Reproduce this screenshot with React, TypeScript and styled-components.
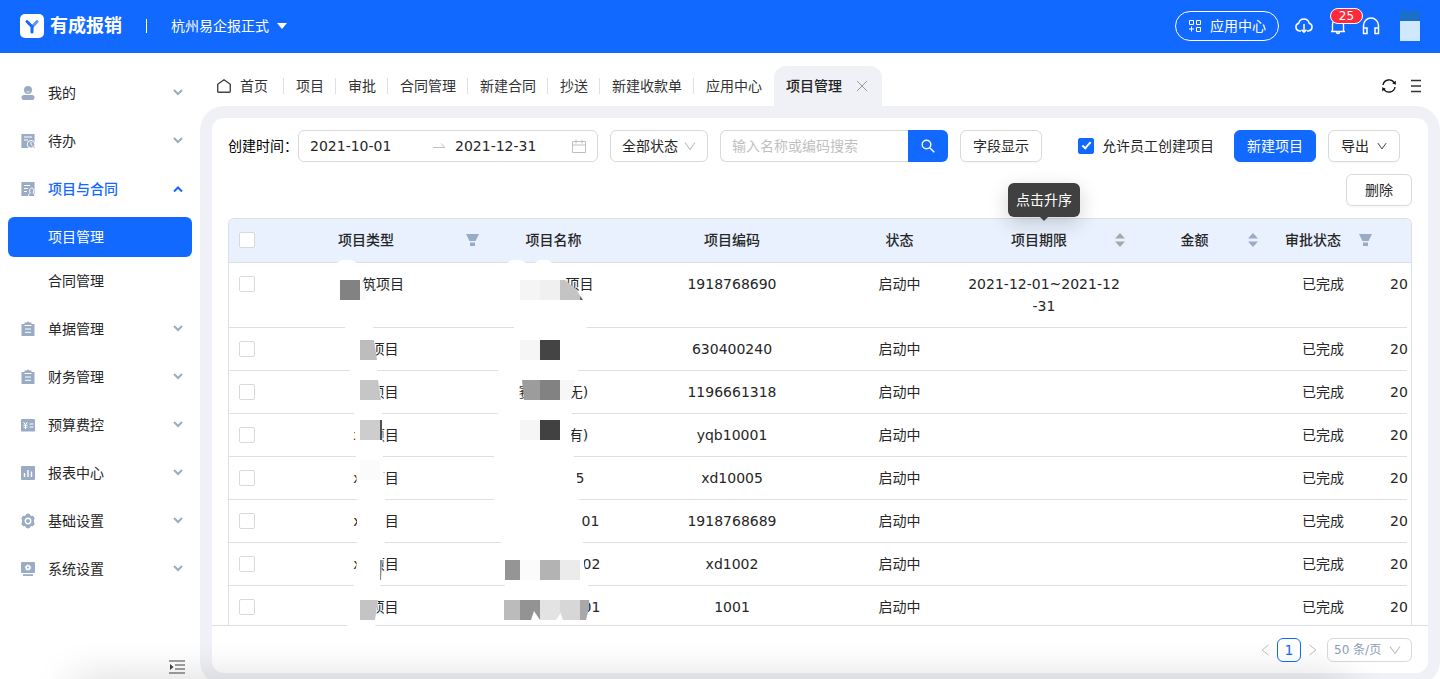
import React from "react";
import styled, { createGlobalStyle, css } from "styled-components";

const blue = "#1269ff";
const slate = "#9aabc4";
const line = "#dcdfe6";

const GlobalStyle = createGlobalStyle`
  *, *::before, *::after { box-sizing: border-box; }
  body {
    margin: 0;
    background: #fff;
    color: #262626;
    font: 14px/22px "DejaVu Sans", "Noto Sans CJK SC", sans-serif;
  }
  button, input, select { font: inherit; color: inherit; }
  button { cursor: pointer; }
  a { color: inherit; text-decoration: none; }
  ul { list-style: none; margin: 0; padding: 0; }
  svg { display: block; flex: none; }
`;

/* ---------- shell ---------- */

const App = styled.div`
  display: flex;
  flex-direction: column;
  height: 100vh;
  overflow: hidden;
`;

const Header = styled.header`
  flex: none;
  display: flex;
  align-items: center;
  height: 53px;
  padding: 0 20px 2px;
  background: ${blue};
  color: #fff;
`;

const Brand = styled.a`
  display: flex;
  align-items: center;
  gap: 6px;
  font-size: 18px;
  font-weight: 700;
`;

const HeaderRule = styled.span`
  width: 1px;
  height: 14px;
  margin: 0 24px;
  background: #fff;
`;

const PlainButton = styled.button`
  display: flex;
  align-items: center;
  gap: 8px;
  padding: 0;
  border: 0;
  background: none;
`;

const HeaderTools = styled.div`
  display: flex;
  align-items: center;
  gap: 14px;
  margin-left: auto;
`;

const AppCenterButton = styled(PlainButton)`
  height: 30px;
  padding: 0 12px;
  border: 1px solid #fff;
  border-radius: 15px;
`;

const BellButton = styled(PlainButton)`
  position: relative;
`;

const Badge = styled.span`
  position: absolute;
  top: -8px;
  left: 1px;
  width: 33px;
  height: 16px;
  border: 1px solid #fff;
  border-radius: 8px;
  background: #ff2a3c;
  font-size: 12px;
  line-height: 14px;
  text-align: center;
`;

const Avatar = styled.div`
  width: 20px;
  height: 30px;
  margin-left: 5px;
  background: linear-gradient(#1a6fc8 10px, #cfe8fd 10px);
`;

const Body = styled.div`
  flex: 1;
  display: flex;
  min-height: 0;
`;

/* ---------- sidebar ---------- */

const Sidebar = styled.nav`
  flex: none;
  display: flex;
  flex-direction: column;
  width: 200px;
  padding: 20px 8px 4px;
`;

const Menu = styled.ul`
  display: flex;
  flex-direction: column;
  gap: 8px;
`;

const SubMenu = styled.ul`
  display: flex;
  flex-direction: column;
  gap: 4px;
  margin-top: 8px;
`;

const MenuButton = styled.button<{ $open?: boolean }>`
  display: flex;
  align-items: center;
  gap: 12px;
  width: 100%;
  height: 40px;
  padding: 0 8px 0 12px;
  border: 0;
  background: none;
  text-align: left;
  ${(p) => p.$open && css`color: ${blue}; font-weight: 500;`}
  span { flex: 1; }
`;

const SubLink = styled.a<{ $active?: boolean }>`
  display: block;
  padding: 9px 40px;
  border-radius: 6px;
  ${(p) => p.$active && css`background: ${blue}; color: #fff;`}
`;

const CollapseButton = styled(PlainButton)`
  align-self: flex-end;
  margin: auto 7px 0 0;
`;

/* ---------- tabs ---------- */

const Main = styled.div`
  flex: 1;
  display: flex;
  flex-direction: column;
  min-width: 0;
`;

const TabBar = styled.div`
  flex: none;
  display: flex;
  align-items: flex-end;
  height: 53px;
  padding: 0 18px 0 16px;
`;

const Tab = styled.a<{ $home?: boolean; $last?: boolean }>`
  display: flex;
  align-items: center;
  gap: 8px;
  height: 40px;
  padding-left: ${(p) => (p.$home ? 0 : 12)}px;
  color: #333;
  &::after {
    content: "";
    width: 1px;
    height: 16px;
    margin-left: ${(p) => (p.$home ? 7 : 3)}px;
    background: ${(p) => (p.$last ? "transparent" : line)};
  }
`;

const ActiveTab = styled.div`
  display: flex;
  align-items: center;
  gap: 14px;
  height: 40px;
  padding: 0 14px 0 12px;
  border-radius: 12px 12px 0 0;
  background: #eff1f6;
  color: #222;
  font-weight: 500;
`;

const TabTools = styled.div`
  display: flex;
  align-items: center;
  gap: 13px;
  height: 40px;
  margin-left: auto;
`;

const Frame = styled.main`
  flex: 1;
  display: flex;
  min-height: 0;
  margin-bottom: -6px;
  padding: 12px;
  border-radius: 24px;
  background: #eff1f6;
`;

const Panel = styled.section`
  position: relative;
  flex: 1;
  display: flex;
  flex-direction: column;
  min-width: 0;
  border-radius: 12px;
  background: #fff;
`;

/* ---------- filters ---------- */

const Filters = styled.form`
  flex: none;
  display: flex;
  align-items: center;
  gap: 12px;
  padding: 12px 28px 12px 16px;
`;

const RangeLabel = styled.label`
  margin-right: -12px;
  color: #000;
  white-space: nowrap;
`;

const Box = css`
  height: 32px;
  border: 1px solid #d9d9d9;
  border-radius: 6px;
  background: #fff;
`;

const RangeField = styled.div`
  ${Box}
  display: flex;
  align-items: center;
  gap: 10px;
  flex: 0 1 300px;
  min-width: 0;
  padding: 0 11px;
  svg:last-child { margin-left: -6px; }
`;

const DateInput = styled.input`
  flex: 1;
  min-width: 0;
  padding: 0;
  border: 0;
  outline: 0;
  background: none;
`;

const SelectWrap = styled.span<{ $small?: boolean }>`
  ${Box}
  display: inline-flex;
  align-items: center;
  padding: 0 11px;
  ${(p) =>
    p.$small &&
    css`
      height: 24px;
      padding: 0 10px 0 6px;
      color: #8c9db8;
      font-size: 12px;
    `}
`;

const Select = styled.select<{ $width: number }>`
  width: ${(p) => p.$width}px;
  padding: 0;
  border: 0;
  outline: 0;
  background: none;
  appearance: none;
`;

const Search = styled.div`
  display: flex;
  flex: 0 1 228px;
  min-width: 0;
  height: 32px;
`;

const SearchInput = styled.input`
  flex: 1;
  min-width: 0;
  padding: 0 11px;
  border: 1px solid #d9d9d9;
  border-right: 0;
  border-radius: 6px 0 0 6px;
  outline: 0;
  &::placeholder { color: #bfbfbf; }
`;

const SearchButton = styled.button`
  display: grid;
  place-items: center;
  width: 40px;
  padding: 0;
  border: 0;
  border-radius: 0 6px 6px 0;
  background: ${blue};
`;

const Button = styled.button<{ $primary?: boolean }>`
  ${Box}
  display: inline-flex;
  align-items: center;
  gap: 8px;
  padding: 0 12px;
  white-space: nowrap;
  box-shadow: 0 2px 0 rgba(0, 0, 0, 0.02);
  ${(p) => p.$primary && css`border-color: ${blue}; background: ${blue}; color: #fff;`}
`;

const DeleteButton = styled(Button)`
  padding: 0 18px;
`;

const AllowLabel = styled.label`
  display: flex;
  align-items: center;
  gap: 8px;
  margin: 0 8px 0 auto;
  white-space: nowrap;
`;

const Check = styled.input`
  appearance: none;
  display: block;
  flex: none;
  width: 16px;
  height: 16px;
  margin: 0;
  border: 1px solid #d9d9d9;
  border-radius: 2px;
  background: #fff;
  &:checked {
    border-color: ${blue};
    background: ${blue};
  }
  &:checked::after {
    content: "";
    display: block;
    width: 5px;
    height: 9px;
    margin: 1px 0 0 5px;
    border: solid #fff;
    border-width: 0 2px 2px 0;
    transform: rotate(42deg);
  }
`;

const Actions = styled.div`
  flex: none;
  display: flex;
  justify-content: flex-end;
  padding: 0 16px 12px;
`;

/* ---------- table ---------- */

const TableArea = styled.div`
  flex: 1;
  min-height: 0;
  margin: 0 16px;
  border: solid ${line};
  border-width: 1px 1px 0;
  border-radius: 6px 6px 0 0;
  clip-path: inset(-90px 0 0 0);
`;

const Table = styled.table`
  width: 100%;
  table-layout: fixed;
  border-collapse: separate;
  border-spacing: 0;
  text-align: center;
`;

const Th = styled.th`
  position: relative;
  height: 44px;
  padding: 0 8px 2px;
  border-bottom: 1px solid ${line};
  background: #e9f1ff;
  font-weight: 500;
  white-space: nowrap;
  &:first-child { padding: 0 10px 2px; border-top-left-radius: 5px; }
  &:last-child { border-top-right-radius: 5px; }
`;

const ThInner = styled.div`
  display: flex;
  align-items: center;
  span { flex: 1; }
`;

const FilterButton = styled(PlainButton)`
  justify-content: flex-end;
  width: 20px;
`;

const Td = styled.td`
  padding: 10px 8px;
  border-bottom: 1px solid ${line};
  vertical-align: top;
  word-break: break-all;
  &:first-child { padding: 13px 10px; }
`;

const EdgeTd = styled(Td)`
  padding: 10px 0 10px 10px;
  white-space: nowrap;
  text-align: left;
`;

const Unbroken = styled.span`
  display: inline-block;
  white-space: nowrap;
`;

const Gap = styled.i<{ $width: number }>`
  display: inline-block;
  width: ${(p) => p.$width}px;
`;

const Tooltip = styled.div`
  position: absolute;
  bottom: 45px;
  left: 50%;
  width: 72px;
  padding: 6px 8px;
  margin-left: -36px;
  border-radius: 6px;
  background: #404040;
  box-shadow: 0 6px 20px rgba(0, 0, 0, 0.18);
  color: #fff;
  font-weight: 400;
  &::after {
    content: "";
    position: absolute;
    top: 100%;
    left: 50%;
    margin-left: -4px;
    border: 4px solid transparent;
    border-top-color: #404040;
    border-bottom: 0;
  }
`;

const Mosaic = styled.svg`
  position: absolute;
  top: 137px;
  left: 118px;
  pointer-events: none;
`;

const Footer = styled.footer`
  flex: none;
  display: flex;
  align-items: center;
  justify-content: flex-end;
  height: 48px;
  padding: 0 16px;
  border-top: 1px solid ${line};
`;

const PageButton = styled.button`
  width: 24px;
  height: 24px;
  margin: 0 8px;
  padding: 0;
  border: 1px solid ${blue};
  border-radius: 6px;
  background: #fff;
  color: ${blue};
  font-weight: 500;
  line-height: 20px;
`;

const PageSize = styled.div`
  margin-left: 10px;
  display: flex;
`;

const BottomShade = styled.div`
  position: fixed;
  bottom: -30px;
  left: 80px;
  right: 100px;
  height: 20px;
  box-shadow: 0 0 44px 6px rgba(0, 0, 0, 0.2);
  pointer-events: none;
`;

/* ---------- icons ---------- */

const Chevron = ({ up, color = slate }: { up?: boolean; color?: string }) => (
  <svg width="12" height="12" viewBox="0 0 12 12" fill="none" stroke={color} strokeWidth="2">
    <path d={up ? "M2 8.5 6 4.5 10 8.5" : "M2 3 6 7 10 3"} />
  </svg>
);

const ThinDown = ({ color = "#bfbfbf", size = 12 }: { color?: string; size?: number }) => (
  <svg width={size} height={size} viewBox="0 0 12 12" fill="none" stroke={color} strokeWidth="1.1">
    <path d="M1 2.5 6 9.5 11 2.5" />
  </svg>
);

const Funnel = () => (
  <svg width="14" height="14" viewBox="0 0 14 14" fill={slate}>
    <path d="M1 1h13l-3.500 7h-6zM5 9.500h5V13H5z" />
  </svg>
);

const Sorter = ({ color = slate }: { color?: string }) => (
  <svg width="10" height="16" viewBox="0 0 10 16" fill={color}>
    <path d="M5 1 10 6.500H0zM5 15 0 9.500h10z" />
  </svg>
);

type IconName = "user" | "todo" | "project" | "doc" | "budget" | "report" | "gear" | "system";

const iconShapes: Record<IconName, React.ReactNode> = {
  user: (
    <>
      <circle cx="8" cy="5" r="4" />
      <rect x="1.500" y="10" width="13" height="5" rx="2.500" />
      <path d="M6.500 6.500q1.500 1.200 3 0" fill="none" stroke="#fff" strokeWidth=".8" />
    </>
  ),
  todo: (
    <>
      <path d="M2 1h12a.6.6 0 0 1 .6.6V15H2a.6.6 0 0 1-.6-.6V1.600A.6.6 0 0 1 2 1z" />
      <path d="M4 4h8M4 7h4" stroke="#fff" />
      <circle cx="11" cy="11.300" r="3.800" stroke="#fff" />
      <path d="M11 9v2.500l1.600 1.300" fill="none" stroke="#fff" />
    </>
  ),
  project: (
    <>
      <path d="M2 1h12a.6.6 0 0 1 .6.6V15H2a.6.6 0 0 1-.6-.6V1.600A.6.6 0 0 1 2 1z" />
      <path d="M4 4.500h6M4 7.500h4M4 10.500h3" stroke="#fff" />
      <path d="M8.500 15c0-2 1-2.600 1.800-3C8.800 9.500 9.800 7 11.700 7s2.800 2.500 1.400 5c.8.400 1.700 1 1.700 3" fill={slate} stroke="#fff" />
    </>
  ),
  doc: (
    <>
      <path d="M1.500 3h3V1.500h2L8 .5l1.500 1h2V3h3v12h-13z" />
      <path d="M4.500 4.500h7M5 8h6M5 11.300h6" stroke="#fff" />
    </>
  ),
  budget: (
    <>
      <rect x="1" y="2" width="14" height="12.500" rx="1" />
      <path d="m3.500 5 2 2.800 2-2.800M5.500 7.500V12M3.500 8.300h4M3.500 10.200h4M9.500 7h4M9.500 10h4" fill="none" stroke="#fff" />
    </>
  ),
  report: (
    <>
      <rect x="1" y="1" width="14" height="14" rx="1" />
      <path d="M4.500 8v4M8 5v7M11.500 6.500V12" stroke="#fff" strokeWidth="1.400" />
    </>
  ),
  gear: (
    <>
      <path d="M6 1.200 8 .5l2 .7.900 1.700 2-.1 1.800 2.200-.7 2v2l.7 2-1.800 2.200-2-.1-.9 1.700-2 .7-2-.7-.9-1.700-2 .1L1.300 11 2 9V7l-.7-2 1.800-2.200 2 .1z" />
      <circle cx="8" cy="8" r="2.700" fill="none" stroke="#fff" strokeWidth="1.500" />
    </>
  ),
  system: (
    <>
      <rect x="1" y="1" width="14" height="11" rx="1" />
      <rect x="3" y="13.200" width="10" height="1.800" />
      <circle cx="8" cy="6.500" r="1.800" fill="none" stroke="#fff" strokeWidth="1.600" />
      <circle cx="8" cy="6.500" r="2.800" fill="none" stroke="#fff" strokeDasharray="1.200 1.730" />
    </>
  ),
};

const MenuIcon = ({ name }: { name: IconName }) => (
  <svg width="16" height="16" viewBox="0 0 16 16" fill={slate}>
    {iconShapes[name]}
  </svg>
);

/* ---------- data ---------- */

const menu: { icon: IconName; label: string; children?: string[] }[] = [
  { icon: "user", label: "我的" },
  { icon: "todo", label: "待办" },
  { icon: "project", label: "项目与合同", children: ["项目管理", "合同管理"] },
  { icon: "doc", label: "单据管理" },
  { icon: "doc", label: "财务管理" },
  { icon: "budget", label: "预算费控" },
  { icon: "report", label: "报表中心" },
  { icon: "gear", label: "基础设置" },
  { icon: "system", label: "系统设置" },
];

const tabs = ["项目", "审批", "合同管理", "新建合同", "抄送", "新建收款单", "应用中心"];

const columnWidths = [36, 222, 133, undefined, 111, 178, 133, 114, 27, 4];

/* A redacted text keeps the part before and after the hidden run, and the width of that run. */
type Redacted = [before: string, hidden: number, after: string];

const rows: { type: Redacted; name: Redacted; code: string; period?: [string, string] }[] = [
  { type: ["", 14, "筑项目"], name: ["", 52, "项目"], code: "1918768690", period: ["2021-12-01~2021-12", "-31"] },
  { type: ["", 17, "项目"], name: ["", 0, ""], code: "630400240" },
  { type: ["", 17, "项目"], name: ["赛", 36, "无)"], code: "1196661318" },
  { type: ["x", 9, "项目"], name: ["", 50, "有)"], code: "yqb10001" },
  { type: ["x", 9, "项目"], name: ["", 53, "5"], code: "xd10005" },
  { type: ["x", 9, "项目"], name: ["", 74, "01"], code: "1918768689" },
  { type: ["x", 9, "项目"], name: ["", 76, "02"], code: "xd1002" },
  { type: ["", 17, "项目"], name: ["", 76, "01"], code: "1001" },
];

const RedactedText = ({ value: [before, hidden, after] }: { value: Redacted }) => (
  <>
    {before}
    <Gap $width={hidden} />
    {after}
  </>
);

const tiles: [points: string, fill: string][] = [
  ["340,280 360,280 360,300 340,300", "#828282"],
  ["360,290 364,280 366,300 360,300", "#fbfbfb"],
  ["360,340 374,340 377,360 360,360", "#bdbdbd"],
  ["360,380 378,380 381,400 360,400", "#c6c6c6"],
  ["360,420 380,420 380,440 360,440", "#cdcdcd"],
  ["380,420 382,420 382,440 380,440", "#505050"],
  ["360,460 380,460 380,480 360,480", "#fbfbfb"],
  ["380,560 382,560 381,580 380,580", "#8a8a8a"],
  ["360,600 378,600 375,620 360,620", "#c4c4c4"],
  ["520,280 540,280 540,300 520,300", "#f5f5f5"],
  ["540,280 560,280 560,300 540,300", "#f0f0f0"],
  ["560,280 565,280 576,289 583,300 560,300", "#c4c4c4"],
  ["580,296 583,300 580,300", "#666"],
  ["520,340 540,340 540,360 520,360", "#f6f6f6"],
  ["540,340 560,340 560,360 540,360", "#444"],
  ["522,380 540,380 540,400 524,400", "#9c9c9c"],
  ["540,380 560,380 560,400 540,400", "#828282"],
  ["560,380 575,380 571,400 560,400", "#f7f7f7"],
  ["520,420 540,420 540,440 520,440", "#f6f6f6"],
  ["540,420 560,420 560,440 540,440", "#414141"],
  ["505,560 520,560 520,580 505,580", "#959595"],
  ["520,560 540,560 540,580 520,580", "#fbfbfb"],
  ["540,560 560,560 560,580 540,580", "#b3b3b3"],
  ["560,560 580,560 580,580 560,580", "#ebebeb"],
  ["504,600 520,600 520,620 504,620", "#bbb"],
  ["520,600 540,600 540,620 534,611 531,620 520,620", "#939393"],
  ["540,600 560,600 560,614 556,620 540,620", "#e3e3e3"],
  ["560,600 580,600 580,620 563,620 560,612", "#d7d7d7"],
  ["580,600 589,600 589,608 586,620 580,620", "#a8a8a8"],
];

const smears = [
  "337,263 341,260 352,260 357,263 361,275 366,300 373,327 376,350 377,371 381,395 382,414 383,457 385,500 385,542 382,565 380,585 377,610 375,628 365,635 355,635 347,625 352,600 354,585 357,560 357,500 356,457 354,414 350,371 345,327 338,290",
  "507,263 511,260 521,260 526,263 535,263 539,260 548,260 552,263 560,275 566,290 583,300 587,327 580,350 578,371 571,392 572,414 571,440 574,457 577,478 579,500 581,521 583,543 584,564 588,586 588,596 584,600 589,622 504,622 505,587 501,543 494,500 494,457 496,414 510,410 524,405 524,382 519,378 498,371 510,340 514,327",
];

/* ---------- page ---------- */

export default function ProjectManagement() {
  return (
    <App>
      <GlobalStyle />
      <Header>
        <Brand href="#">
          <svg width="24" height="24" viewBox="0 0 24 24" fill="none" strokeWidth="3" strokeLinecap="round">
            <rect width="24" height="24" rx="5" fill="#fff" />
            <path d="M12.500 12.500 17 7.500" stroke="#5b96ff" />
            <path d="M7 7.500l5 5V18" stroke={blue} strokeLinejoin="round" />
          </svg>
          有成报销
        </Brand>
        <HeaderRule />
        <PlainButton type="button">
          杭州易企报正式
          <svg width="10" height="6" viewBox="0 0 10 6" fill="#fff">
            <path d="M0 0h10L5 6z" />
          </svg>
        </PlainButton>
        <HeaderTools>
          <AppCenterButton type="button">
            <svg width="14" height="14" viewBox="0 0 14 14" fill="none" stroke="#fff">
              <path d="M1.500 1.500h4v4h-4zM8.500 1.500h4v4h-4zM8.500 8.500h4v4h-4zM3.500 7.500v5M1 10h5" />
            </svg>
            应用中心
          </AppCenterButton>
          <PlainButton type="button" aria-label="下载">
            <svg width="22" height="20" viewBox="0 0 22 20" fill="none" stroke="#fff" strokeWidth="1.500">
              <path d="M8 15H6.500a4 4 0 0 1-.8-7.800A5.400 5.400 0 0 1 16.200 7.200 4 4 0 0 1 15.500 15H14M11 8v8M8.500 13.700l2.500 2.500 2.500-2.500" />
            </svg>
          </PlainButton>
          <BellButton type="button" aria-label="消息">
            <svg width="18" height="20" viewBox="0 0 18 20" fill="none" stroke="#fff" strokeWidth="1.400">
              <path d="M2 15.500h14M3.500 15.500V8.500a5.500 5.500 0 0 1 11 0v7M7.500 16a1.500 1.500 0 0 0 3 0" />
            </svg>
            <Badge>25</Badge>
          </BellButton>
          <PlainButton type="button" aria-label="客服">
            <svg width="20" height="20" viewBox="0 0 20 20" fill="none" stroke="#fff" strokeWidth="1.500">
              <path d="M2.500 17.500V9.500a7.500 7.500 0 0 1 15 0v8M2.500 12H6v5.500H2.500zM17.500 12H14v5.500h3.500z" />
            </svg>
          </PlainButton>
          <Avatar />
        </HeaderTools>
      </Header>

      <Body>
        <Sidebar>
          <Menu>
            {menu.map(({ icon, label, children }) => (
              <li key={label}>
                <MenuButton type="button" $open={!!children} aria-expanded={!!children}>
                  <MenuIcon name={icon} />
                  <span>{label}</span>
                  <Chevron up={!!children} color={children ? blue : slate} />
                </MenuButton>
                {children && (
                  <SubMenu>
                    {children.map((child, i) => (
                      <li key={child}>
                        <SubLink href="#" $active={i === 0}>
                          {child}
                        </SubLink>
                      </li>
                    ))}
                  </SubMenu>
                )}
              </li>
            ))}
          </Menu>
          <CollapseButton type="button" aria-label="收起菜单">
            <svg width="16" height="16" viewBox="0 0 16 16" fill="#444">
              <path d="M0 1.500h16v1H0zM6 5.500h10v1H6zM6 9.500h10v1H6zM0 13.500h16v1H0zM1 5l3.500 3L1 11z" />
            </svg>
          </CollapseButton>
        </Sidebar>

        <Main>
          <TabBar>
            <Tab href="#" $home>
              <svg width="16" height="16" viewBox="0 0 16 16" fill="none" stroke="#444" strokeWidth="1.400">
                <path d="M1.700 6.200 8 1.700l6.300 4.500v7.100a1 1 0 0 1-1 1H2.700a1 1 0 0 1-1-1z" strokeLinejoin="round" />
              </svg>
              首页
            </Tab>
            {tabs.map((tab, i) => (
              <Tab key={tab} href="#" $last={i === tabs.length - 1}>
                {tab}
              </Tab>
            ))}
            <ActiveTab>
              项目管理
              <PlainButton type="button" aria-label="关闭">
                <svg width="12" height="12" viewBox="0 0 12 12" stroke="#999">
                  <path d="M1 1l10 10M11 1 1 11" />
                </svg>
              </PlainButton>
            </ActiveTab>
            <TabTools>
              <PlainButton type="button" aria-label="刷新">
                <svg width="16" height="16" viewBox="0 0 16 16" fill="none" stroke="#111" strokeWidth="1.400">
                  <path d="M2 7a6.100 6.100 0 0 1 11.300-2M14 9a6.100 6.100 0 0 1-11.300 2" />
                  <path d="M14.800 2.800v4l-3.600-1.500zM1.200 13.200v-4l3.600 1.500z" fill="#111" stroke="none" />
                </svg>
              </PlainButton>
              <PlainButton type="button" aria-label="更多">
                <svg width="12" height="14" viewBox="0 0 12 14" stroke="#333" strokeWidth="1.300">
                  <path d="M1 1.500h10M1 7h10M1 12.500h10" />
                </svg>
              </PlainButton>
            </TabTools>
          </TabBar>

          <Frame>
            <Panel>
              <Filters onSubmit={(e) => e.preventDefault()}>
                <RangeLabel htmlFor="from">创建时间：</RangeLabel>
                <RangeField>
                  <DateInput id="from" defaultValue="2021-10-01" />
                  <svg width="12" height="8" viewBox="0 0 12 8" fill="none" stroke="#bfbfbf">
                    <path d="M0 5.500h12L8 1.500" />
                  </svg>
                  <DateInput aria-label="结束日期" defaultValue="2021-12-31" />
                  <svg width="14" height="14" viewBox="0 0 14 14" fill="none" stroke="#bfbfbf">
                    <path d="M.5 2.500h13v11H.5zM.5 6h13M4 .5v4M10 .5v4" />
                  </svg>
                </RangeField>
                <SelectWrap>
                  <Select $width={62} aria-label="状态">
                    <option>全部状态</option>
                  </Select>
                  <ThinDown />
                </SelectWrap>
                <Search>
                  <SearchInput aria-label="搜索" placeholder="输入名称或编码搜索" />
                  <SearchButton aria-label="查询">
                    <svg width="14" height="14" viewBox="0 0 14 14" fill="none" stroke="#fff" strokeWidth="1.400">
                      <circle cx="5.500" cy="5.500" r="4.300" />
                      <path d="m8.700 8.700 4.600 4.600" />
                    </svg>
                  </SearchButton>
                </Search>
                <Button type="button">字段显示</Button>
                <AllowLabel>
                  <Check type="checkbox" defaultChecked />
                  允许员工创建项目
                </AllowLabel>
                <Button type="button" $primary>
                  新建项目
                </Button>
                <Button type="button">
                  导出
                  <ThinDown color="#333" size={10} />
                </Button>
              </Filters>
              <Actions>
                <DeleteButton type="button">删除</DeleteButton>
              </Actions>

              <TableArea>
                <Table>
                  <colgroup>
                    {columnWidths.map((width, i) => (
                      <col key={i} width={width} />
                    ))}
                  </colgroup>
                  <thead>
                    <tr>
                      <Th>
                        <Check type="checkbox" aria-label="全选" />
                      </Th>
                      <Th>
                        <ThInner>
                          <span>项目类型</span>
                          <FilterButton type="button" aria-label="筛选项目类型">
                            <Funnel />
                          </FilterButton>
                        </ThInner>
                      </Th>
                      <Th>项目名称</Th>
                      <Th>项目编码</Th>
                      <Th>状态</Th>
                      <Th>
                        <ThInner>
                          <span>项目期限</span>
                          <PlainButton type="button" aria-label="按期限排序">
                            <Sorter color="#a8a8a8" />
                          </PlainButton>
                        </ThInner>
                        <Tooltip role="tooltip">点击升序</Tooltip>
                      </Th>
                      <Th>
                        <ThInner>
                          <span>金额</span>
                          <PlainButton type="button" aria-label="按金额排序">
                            <Sorter />
                          </PlainButton>
                        </ThInner>
                      </Th>
                      <Th>
                        <ThInner>
                          <span>审批状态</span>
                          <FilterButton type="button" aria-label="筛选审批状态">
                            <Funnel />
                          </FilterButton>
                        </ThInner>
                      </Th>
                      <Th colSpan={2} />
                    </tr>
                  </thead>
                  <tbody>
                    {rows.map((row) => (
                      <tr key={row.code}>
                        <Td>
                          <Check type="checkbox" aria-label={row.code} />
                        </Td>
                        <Td>
                          <RedactedText value={row.type} />
                        </Td>
                        <Td>
                          <RedactedText value={row.name} />
                        </Td>
                        <Td>{row.code}</Td>
                        <Td>启动中</Td>
                        <Td>
                          {row.period?.map((part) => (
                            <Unbroken key={part}>{part}</Unbroken>
                          ))}
                        </Td>
                        <Td />
                        <Td>已完成</Td>
                        <EdgeTd>20</EdgeTd>
                      </tr>
                    ))}
                  </tbody>
                </Table>
              </TableArea>

              <Footer>
                <PlainButton type="button" aria-label="上一页">
                  <svg width="8" height="12" viewBox="0 0 8 12" fill="none" stroke="#bfbfbf">
                    <path d="M7.500 1 1 6l6.500 5" />
                  </svg>
                </PlainButton>
                <PageButton type="button">1</PageButton>
                <PlainButton type="button" aria-label="下一页">
                  <svg width="8" height="12" viewBox="0 0 8 12" fill="none" stroke="#bfbfbf">
                    <path d="M.5 1 7 6 .5 11" />
                  </svg>
                </PlainButton>
                <PageSize>
                  <SelectWrap $small>
                    <Select $width={55} aria-label="每页条数">
                      <option>50 条/页</option>
                    </Select>
                    <ThinDown />
                  </SelectWrap>
                </PageSize>
              </Footer>

              <Mosaic width="300" height="385" viewBox="330 255 300 385">
                {smears.map((points) => (
                  <polygon key={points} points={points} fill="#fff" />
                ))}
                {tiles.map(([points, fill]) => (
                  <polygon key={points} points={points} fill={fill} />
                ))}
              </Mosaic>
            </Panel>
          </Frame>
        </Main>
      </Body>
      <BottomShade />
    </App>
  );
}
